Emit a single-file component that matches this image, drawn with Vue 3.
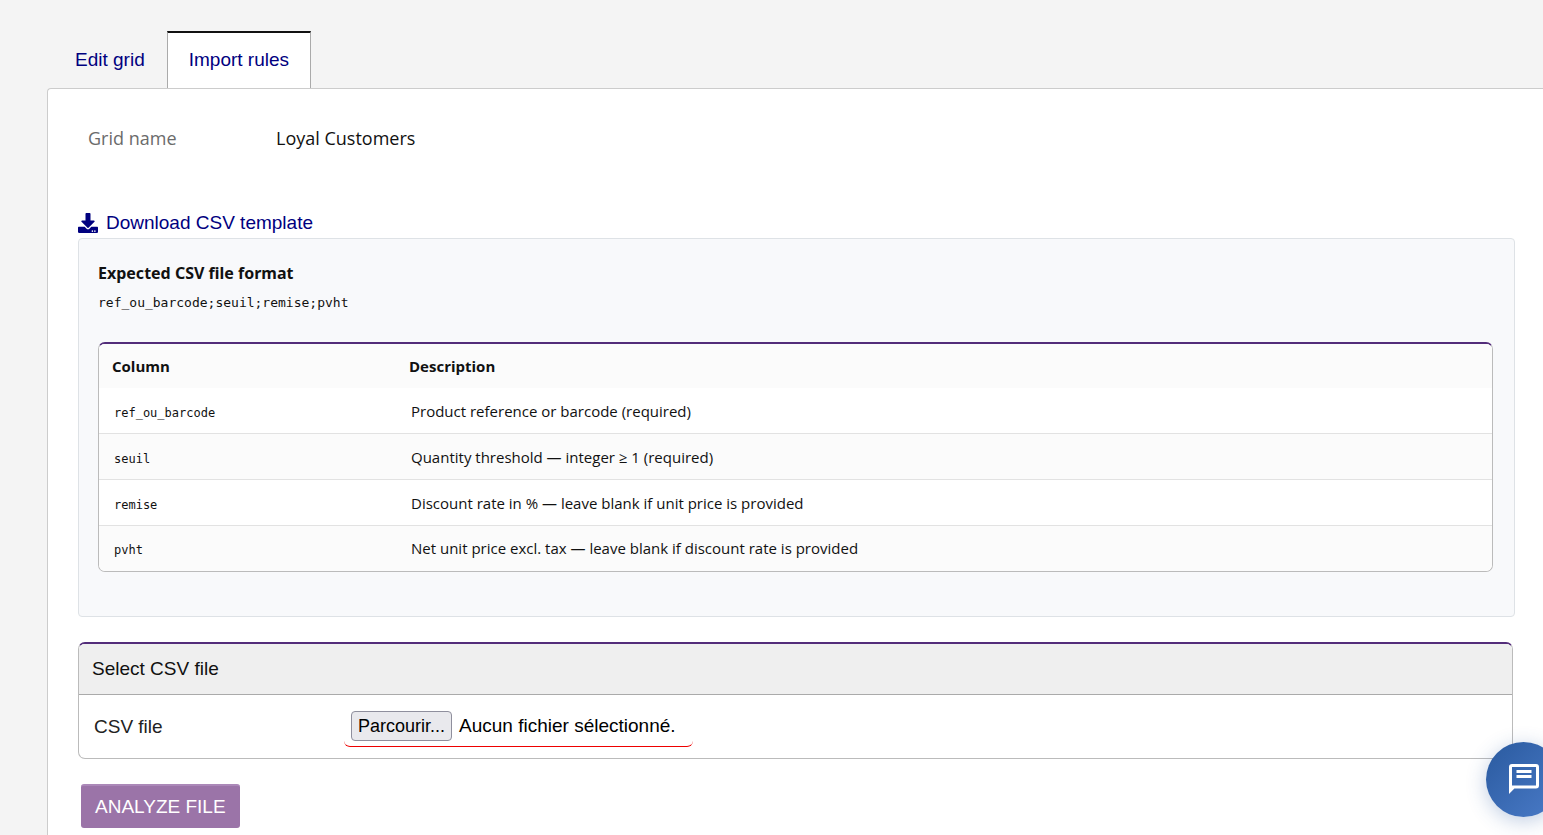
<script setup>
import { ref } from 'vue'

const tabs = [
  { id: 'edit', label: 'Edit grid' },
  { id: 'import', label: 'Import rules' },
]
const active = ref('import')

const columns = [
  { name: 'ref_ou_barcode', text: 'Product reference or barcode (required)' },
  { name: 'seuil', text: 'Quantity threshold — integer ≥ 1 (required)' },
  { name: 'remise', text: 'Discount rate in % — leave blank if unit price is provided' },
  { name: 'pvht', text: 'Net unit price excl. tax — leave blank if discount rate is provided' },
]

const fileName = ref('Aucun fichier sélectionné.')
function onFile(event) {
  const file = event.target.files[0]
  fileName.value = file ? file.name : 'Aucun fichier sélectionné.'
}
</script>

<template>
  <div class="page">
    <nav class="tabs">
      <a
        v-for="tab in tabs"
        :key="tab.id"
        href="#"
        class="tab"
        :class="{ active: tab.id === active }"
        @click.prevent="active = tab.id"
      >{{ tab.label }}</a>
    </nav>

    <main class="panel">
      <dl class="field">
        <dt>Grid name</dt>
        <dd>Loyal Customers</dd>
      </dl>

      <a href="#" class="download">
        <svg class="download-icon" viewBox="0 0 512 512" aria-hidden="true">
          <path d="M216 0h80c13.300 0 24 10.700 24 24v168h87.700c17.800 0 26.700 21.500 14.100 34.100L269.700 378.300c-7.500 7.500-19.800 7.500-27.300 0L90.100 226.100c-12.600-12.600-3.700-34.100 14.100-34.100H192V24c0-13.300 10.700-24 24-24zm296 376v112c0 13.300-10.700 24-24 24H24c-13.300 0-24-10.700-24-24V376c0-13.300 10.700-24 24-24h146.700l49 49c20.100 20.100 52.500 20.100 72.600 0l49-49H488c13.300 0 24 10.700 24 24zm-124 88c0-11-9-20-20-20s-20 9-20 20 9 20 20 20 20-9 20-20zm64 0c0-11-9-20-20-20s-20 9-20 20 9 20 20 20 20-9 20-20z" />
        </svg>
        <span>Download CSV template</span>
      </a>

      <section class="format">
        <h2>Expected CSV file format</h2>
        <code class="sample">ref_ou_barcode;seuil;remise;pvht</code>
        <div class="frame">
          <table>
            <thead>
              <tr>
                <th class="name">Column</th>
                <th>Description</th>
              </tr>
            </thead>
            <tbody>
              <tr v-for="column in columns" :key="column.name">
                <td><code>{{ column.name }}</code></td>
                <td>{{ column.text }}</td>
              </tr>
            </tbody>
          </table>
        </div>
      </section>

      <form class="upload" @submit.prevent>
        <div class="frame select">
          <h3>Select CSV file</h3>
          <div class="row">
            <label for="csv-file" class="row-label">CSV file</label>
            <div class="picker">
              <span class="browse">Parcourir...</span>
              <span>{{ fileName }}</span>
              <input id="csv-file" type="file" accept=".csv" @change="onFile" />
            </div>
          </div>
        </div>
        <button type="submit" class="analyze">ANALYZE FILE</button>
      </form>
    </main>

    <button type="button" class="chat" aria-label="Chat">
      <svg viewBox="0 0 24 24" aria-hidden="true">
        <path fill-rule="evenodd" d="M4 2h16a2 2 0 0 1 2 2v12.400a2 2 0 0 1-2 2H5.600L2 22V4a2 2 0 0 1 2-2zm0 2v12.400h16V4z" />
        <path d="M7 6h10v2H7zM7 9.400h10v2H7z" />
      </svg>
    </button>
  </div>
</template>

<style>
body {
  margin: 0;
  background: #f4f4f4;
}
</style>

<style scoped>
* {
  box-sizing: border-box;
}

.page {
  display: flex;
  flex-direction: column;
  min-height: 100vh;
  padding: 31px 0 0 47px;
  background: #f4f4f4;
  color: #111;
  font-family: "Liberation Sans", Arial, sans-serif;
  font-size: 19px;
}

.tabs {
  display: flex;
  padding-left: 6px;
}

.tab {
  height: 57px;
  padding: 0 21px;
  border: 1px solid transparent;
  border-top-width: 2px;
  border-bottom: 0;
  line-height: 54px;
  color: #00007f;
  text-decoration: none;
}

.tab.active {
  border-color: #111 #aaa;
  background: #fff;
}

.panel {
  flex: 1;
  padding: 35px 28px 7px 30px;
  border: 1px solid #ccc;
  border-right: 0;
  border-bottom: 0;
  border-top-left-radius: 4px;
  background: #fff;
}

.field {
  display: flex;
  margin: 0 0 57px;
  padding-left: 10px;
  font-family: "Open Sans", "Noto Sans", sans-serif;
  font-size: 18px;
  line-height: 28px;
}

.field dt {
  width: 188px;
  color: #6b6b6b;
}

.field dd {
  margin: 0;
}

.download {
  display: flex;
  align-items: center;
  gap: 8px;
  width: fit-content;
  margin-bottom: 2px;
  line-height: 27px;
  color: #00007f;
  text-decoration: none;
}

.download-icon {
  width: 20px;
  height: 20px;
  fill: currentColor;
}

.format {
  padding: 20px 21px 44px 19px;
  border: 1px solid #dee2e6;
  border-radius: 4px;
  background: #f8f9fb;
  font-family: "Open Sans", "Noto Sans", sans-serif;
  font-size: 15px;
}

.format h2 {
  margin: 0;
  font-family: "Noto Sans", "Open Sans", sans-serif;
  font-size: 16px;
  font-weight: 700;
  line-height: 28px;
}

code {
  font-family: "DejaVu Sans Mono", monospace;
  font-size: 12px;
}

.sample {
  display: block;
  margin-bottom: 23px;
  font-size: 13px;
  line-height: 32px;
}

.frame {
  overflow: hidden;
  border: 1px solid #bbb;
  border-top: 2px solid #532d7a;
  border-radius: 7px;
  background: #fff;
}

table {
  width: 100%;
  border-collapse: separate;
  border-spacing: 0;
  table-layout: fixed;
}

th {
  height: 44px;
  padding: 0 13px;
  background: #fbfbfb;
  font-weight: 700;
  text-align: left;
}

.name {
  width: 297px;
}

td {
  height: 46px;
  padding: 0 15px;
  border-bottom: 1px solid #e2e2e2;
}

tbody tr:nth-child(even) {
  background: #fbfbfb;
}

tbody tr:last-child td {
  height: 45px;
  padding-bottom: 2px;
  border-bottom: 0;
}

.upload {
  margin-top: 25px;
}

.select {
  margin-right: 2px;
}

.select h3 {
  margin: 0;
  padding: 0 13px;
  border-bottom: 1px solid #aaa;
  background: #efefef;
  font-size: 19px;
  font-weight: 400;
  line-height: 50px;
}

.row {
  display: flex;
  align-items: center;
  height: 63px;
  padding-left: 15px;
}

.row-label {
  width: 250px;
  color: #222;
}

.picker {
  position: relative;
  display: flex;
  align-items: center;
  gap: 7px;
  padding: 5px 17px 5px 7px;
  border-bottom: 1px solid #e00;
  border-radius: 6px;
  line-height: 28px;
  color: #000;
}

.picker input {
  position: absolute;
  inset: 0;
  width: 100%;
  opacity: 0;
}

.browse {
  padding: 0 6px;
  border: 1px solid #8f8f9d;
  border-radius: 4px;
  background: #e9e9ed;
  font-size: 18px;
}

.analyze {
  display: block;
  margin: 25px 0 0 3px;
  padding: 0 14px;
  border: 0;
  border-top: 2px solid #ab88b8;
  border-radius: 3px;
  background: #9b74a8;
  color: #fff;
  font: inherit;
  line-height: 42px;
}

.chat {
  position: fixed;
  right: -18px;
  bottom: 18px;
  display: flex;
  align-items: center;
  justify-content: center;
  width: 75px;
  height: 75px;
  padding: 0 0 2px;
  border: 0;
  border-radius: 50%;
  background: linear-gradient(135deg, #2a5a9f, #4a7bc8);
  box-shadow: 0 4px 20px rgba(42, 90, 159, 0.3);
}

.chat svg {
  width: 36px;
  height: 36px;
  fill: #fff;
}
</style>
